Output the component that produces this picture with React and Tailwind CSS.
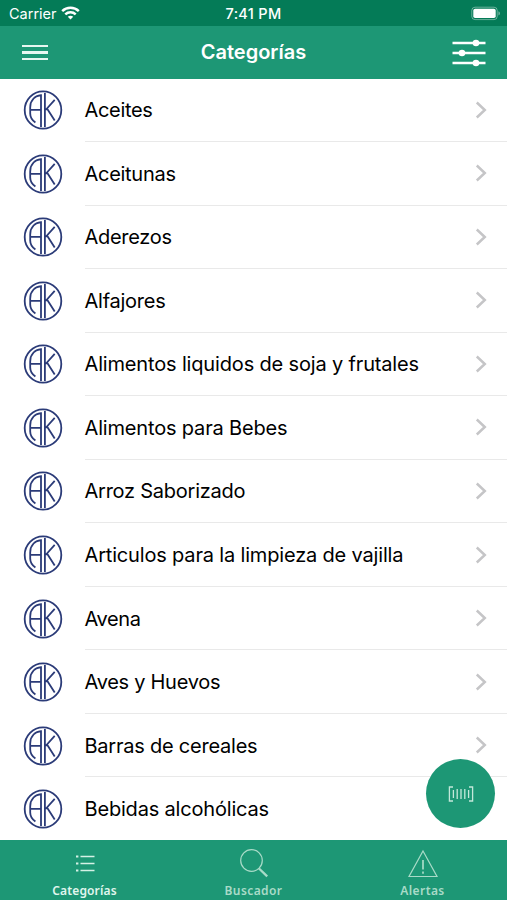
import clsx from "clsx";

const categorias = [
  { nombre: "Aceites", tracking: "tracking-[-0.32px]" },
  { nombre: "Aceitunas", tracking: "tracking-[-0.28px]" },
  { nombre: "Aderezos", tracking: "tracking-[-0.28px]" },
  { nombre: "Alfajores", tracking: "tracking-[-0.25px]" },
  { nombre: "Alimentos liquidos de soja y frutales", tracking: "tracking-[-0.16px]" },
  { nombre: "Alimentos para Bebes", tracking: "tracking-[-0.17px]" },
  { nombre: "Arroz Saborizado", tracking: "tracking-[-0.24px]" },
  { nombre: "Articulos para la limpieza de vajilla", tracking: "tracking-[-0.17px]" },
  { nombre: "Avena", tracking: "tracking-[-0.4px]" },
  { nombre: "Aves y Huevos", tracking: "tracking-[-0.28px]" },
  { nombre: "Barras de cereales", tracking: "tracking-[-0.23px]" },
  { nombre: "Bebidas alcohólicas", tracking: "tracking-[-0.18px]" },
];

function LogoAK() {
  return (
    <svg className="w-10 h-10 shrink-0" viewBox="0 0 40 40" fill="none" stroke="#2b3b78" strokeWidth="1.8">
      <ellipse cx="20" cy="20" rx="18.3" ry="18.7" />
      <path d="M12.4 32.6C8.8 30 7.2 27 7.2 23.5V17.5C7.2 10.5 11.5 6 18 5.2V37M7.2 19.9H18" />
      <path d="M21.9 3V37M31.7 9.8L22.6 20M24 18.6L31.7 30.4" />
    </svg>
  );
}

function Wifi() {
  return (
    <svg className="w-[19px] h-[14px]" viewBox="0 0 19 14" fill="none" stroke="#fff" strokeWidth="2.5">
      <path d="M1.2 5.1C5.8 .7 13.2 .7 17.8 5.1" />
      <path d="M4.3 8.4C7.2 5.6 11.8 5.6 14.7 8.4" />
      <path d="M9.5 13.5L6.8 10.7C8.3 9.4 10.7 9.4 12.2 10.7Z" fill="#fff" stroke="none" />
    </svg>
  );
}

function Bateria() {
  return (
    <svg className="w-[30px] h-[15px]" viewBox="0 0 30 15" fill="none">
      <rect x=".8" y="1.2" width="25.4" height="12.4" rx="3.2" stroke="#fff" strokeOpacity=".4" strokeWidth="1" />
      <rect x="2.3" y="2.7" width="22.4" height="9.4" rx="1.8" fill="#fff" />
      <path d="M27.5 5.2C29.3 5.9 29.3 8.8 27.5 9.5Z" fill="#fff" fillOpacity=".5" />
    </svg>
  );
}

function Filtros() {
  return (
    <svg className="w-[34px] h-[28px]" viewBox="0 0 34 28" stroke="#fff" strokeWidth="2.3" fill="#fff">
      <path d="M.5 4H33.5M.5 14H33.5M.5 24H33.5" />
      <g stroke="none">
        <circle cx="24" cy="4" r="3.3" />
        <circle cx="10" cy="14" r="3.3" />
        <circle cx="24" cy="24" r="3.3" />
      </g>
    </svg>
  );
}

function IconoLista() {
  return (
    <svg className="w-[20px] h-[30px]" viewBox="0 0 20 30" stroke="#d5f1e6" strokeWidth="1.4">
      <path d="M5.5 8.5H19.5M5.5 15.5H19.5M5.5 22.5H19.5" />
      <path d="M1 8.5H3.4M1 15.5H3.4M1 22.5H3.4" strokeWidth="2.2" />
    </svg>
  );
}

function IconoLupa() {
  return (
    <svg className="w-[30px] h-[30px]" viewBox="0 0 30 30" fill="none" stroke="#a9dbc8" strokeWidth="1.2">
      <circle cx="12.5" cy="12.5" r="10.8" />
      <path d="M20 20.5L28.2 28.3" strokeWidth="2.3" />
    </svg>
  );
}

function IconoAlerta() {
  return (
    <svg className="w-[30px] h-[30px]" viewBox="0 0 30 30" fill="none" stroke="#a9dbc8" strokeWidth="1.2">
      <path d="M15 3L29 28.5H1Z" />
      <path d="M15 12V21.5M15 23.5V25.7" strokeWidth="1.7" />
    </svg>
  );
}

function CodigoBarras() {
  return (
    <svg className="w-[26px] h-[18px]" viewBox="0 0 26 18" fill="none" stroke="#c3e8da" strokeWidth="1.3">
      <path d="M5 2H1.4V16H5M21 2H24.6V16H21" />
      <path d="M5.4 5V13M9.2 4V14M13 4V14M16.8 4V14M20.6 5V13" />
    </svg>
  );
}

const tabs = [
  { label: "Categorías", icono: IconoLista, activo: true },
  { label: "Buscador", icono: IconoLupa },
  { label: "Alertas", icono: IconoAlerta },
];

function Fila({ nombre, tracking }) {
  return (
    <li className="h-[63.55px] flex items-center pl-[23px]">
      <LogoAK />
      <div className="ml-[21.5px] h-full flex-1 flex items-center justify-between border-b border-[#e9e9e9] pr-5">
        <span className={clsx("pt-px text-[20px] leading-6 whitespace-nowrap text-black", tracking)}>{nombre}</span>
        <svg className="w-3 h-[18px]" viewBox="0 0 12 18" fill="none" stroke="#c5c5c7" strokeWidth="2.5">
          <path d="M1.8 1.5L9.8 9L1.8 16.5" />
        </svg>
      </div>
    </li>
  );
}

export default function App() {
  return (
    <div className="relative w-[507px] h-[900px] flex flex-col overflow-hidden bg-white font-['Inter',sans-serif]">
      <div className="h-[26px] shrink-0 grid grid-cols-3 items-center bg-[#047b57] text-white text-[15px]">
        <div className="flex items-center gap-1 pl-[9px]">
          <span className="pt-0.5 text-[14.5px]">Carrier</span>
          <Wifi />
        </div>
        <span className="pt-0.5 text-center font-medium text-[14.5px] tracking-[0.3px]">7:41 PM</span>
        <div className="flex justify-end pr-[6px]">
          <Bateria />
        </div>
      </div>

      <header className="h-[53px] shrink-0 grid grid-cols-3 items-center bg-[#1d9775] text-white">
        <button className="ml-[22px] w-[26px] flex flex-col gap-1" aria-label="Menú">
          <span className="h-[2.4px] w-full bg-[#e6f7f0]" />
          <span className="h-[2.4px] w-full bg-[#e6f7f0]" />
          <span className="h-[2.4px] w-full bg-[#e6f7f0]" />
        </button>
        <h1 className="pb-0.5 text-center text-[20px] font-semibold">Categorías</h1>
        <button className="ml-auto mr-[21px]" aria-label="Filtros">
          <Filtros />
        </button>
      </header>

      <div className="flex-1 min-h-0 overflow-hidden">
        <ul className="-mt-[0.6px]">
          {categorias.map((c) => (
            <Fila key={c.nombre} {...c} />
          ))}
        </ul>
      </div>

      <button
        className="absolute left-[426px] top-[759px] w-[69px] h-[69px] rounded-full bg-[#1d9775] flex items-center justify-center"
        aria-label="Escanear"
      >
        <CodigoBarras />
      </button>

      <nav className="h-[60px] shrink-0 grid grid-cols-3 bg-[#1d9775] font-['Noto_Sans',sans-serif]">
        {tabs.map(({ label, icono: Icono, activo }) => (
          <div key={label} className="flex flex-col items-center pt-[8px]">
            <Icono />
            <span
              className={clsx(
                "mt-[5px] text-[12px] leading-4 font-semibold",
                activo ? "tracking-[0.15px] text-[#e0f6ee]" : "tracking-[0.4px] text-[#a9dbc8]"
              )}
            >
              {label}
            </span>
          </div>
        ))}
      </nav>
    </div>
  );
}
